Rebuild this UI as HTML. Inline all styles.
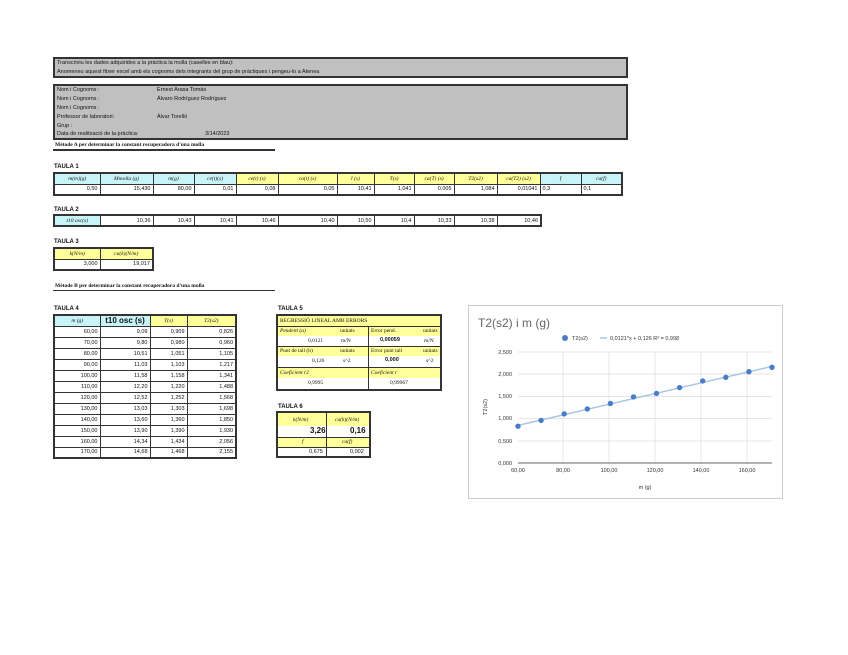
<!DOCTYPE html>
<html><head><meta charset="utf-8">
<style>
*{margin:0;padding:0;box-sizing:border-box}
body{width:848px;height:655px;background:#fff;position:relative;overflow:hidden;font-family:"Liberation Sans",sans-serif;color:#111}
.a{position:absolute;white-space:nowrap}
.box{position:absolute;background:#c0c0c0;border:2px solid #333}
.t{font-size:5.5px;position:absolute;white-space:nowrap}
.lbl{position:absolute;font-size:6px;font-weight:bold}
table{position:absolute;border-collapse:collapse;table-layout:fixed;font-size:5.5px}
td{border:1px solid #333;height:11px;padding:0 2px;text-align:right;overflow:hidden;white-space:nowrap}
.c{background:#c8f4f8;text-align:center;font-style:italic;font-family:"Liberation Serif",serif}
.y{background:#ffff99;text-align:center;font-style:italic;font-family:"Liberation Serif",serif}
.outer{border:2px solid #333}
</style></head><body>

<div class="box" style="left:53px;top:57px;width:575px;height:21px">
<div class="t" style="left:2px;top:1px">Transcriviu les dades adquirides a la pràctica la molla (caselles en blau):</div>
<div class="t" style="left:2px;top:10px">Anomeneu aquest fitxer excel amb els cognoms dels integrants del grup de pràctiques i pengeu-lo a Atenea</div>
</div>

<div class="box" style="left:53px;top:84px;width:575px;height:56px">
<div class="t" style="left:2px;top:1px">Nom i Cognoms :</div><div class="t" style="left:102px;top:1px">Ernest Arasa Tomàs</div>
<div class="t" style="left:2px;top:10px">Nom i Cognoms :</div><div class="t" style="left:102px;top:10px">Álvaro Rodríguez Rodríguez</div>
<div class="t" style="left:2px;top:19px">Nom i Cognoms :</div>
<div class="t" style="left:2px;top:28px">Professor de laboratori:</div><div class="t" style="left:102px;top:28px">Àlvar Torelló</div>
<div class="t" style="left:2px;top:37px">Grup :</div>
<div class="t" style="left:2px;top:45px">Data de realització de la pràctica:</div><div class="t" style="left:150px;top:45px">3/14/2023</div>
</div>

<div class="a" style="left:55px;top:142px;font-size:5.5px;font-weight:bold;font-family:'Liberation Serif',serif">Mètode A per determinar la constant recuperadora d'una molla</div>
<div class="a" style="left:53px;top:149px;width:222px;height:2px;background:#333"></div>

<div class="lbl" style="left:54px;top:164px">TAULA 1</div>
<table class="outer" style="left:53px;top:172px;width:568px">
<colgroup><col style="width:46px"><col style="width:53px"><col style="width:41px"><col style="width:42px"><col style="width:42px"><col style="width:59px"><col style="width:37px"><col style="width:40px"><col style="width:40px"><col style="width:43px"><col style="width:43px"><col style="width:41px"><col style="width:41px"></colgroup>
<tr><td class="c">m(m)(g)</td><td class="c">Mmolla (g)</td><td class="c">m(g)</td><td class="c">ce(t)(s)</td><td class="y">ce(t) (s)</td><td class="y">ca(t) (s)</td><td class="y">t̄ (s)</td><td class="y">T(s)</td><td class="y">ca(T) (s)</td><td class="y">T2(s2)</td><td class="y">ca(T2) (s2)</td><td class="c">f</td><td class="c">ca(f)</td></tr>
<tr><td>0,50</td><td>15,430</td><td>80,00</td><td>0,01</td><td>0,08</td><td>0,05</td><td>10,41</td><td>1,041</td><td>0,005</td><td>1,084</td><td>0,01041</td><td style="text-align:left">0,3</td><td style="text-align:left">0,1</td></tr>
</table>

<div class="lbl" style="left:54px;top:207px">TAULA 2</div>
<table class="outer" style="left:53px;top:214px;width:487px">
<colgroup><col style="width:46px"><col style="width:53px"><col style="width:41px"><col style="width:42px"><col style="width:42px"><col style="width:59px"><col style="width:37px"><col style="width:40px"><col style="width:40px"><col style="width:43px"><col style="width:44px"></colgroup>
<tr><td class="c">t10 osc(s)</td><td>10,36</td><td>10,43</td><td>10,41</td><td>10,46</td><td>10,40</td><td>10,50</td><td>10,4</td><td>10,33</td><td>10,38</td><td>10,46</td></tr>
</table>

<div class="lbl" style="left:54px;top:239px">TAULA 3</div>
<table class="outer" style="left:53px;top:247px;width:99px">
<colgroup><col style="width:46px"><col style="width:53px"></colgroup>
<tr><td class="y">k(N/m)</td><td class="y">ca(k)(N/m)</td></tr>
<tr><td>3,000</td><td>19,017</td></tr>
</table>

<div class="a" style="left:55px;top:283px;font-size:5.5px;font-weight:bold;font-family:'Liberation Serif',serif">Mètode B per determinar la constant recuperadora d'una molla</div>
<div class="a" style="left:53px;top:290px;width:222px;height:1px;background:#333"></div>

<div class="lbl" style="left:54px;top:306px">TAULA 4</div>
<table class="outer" style="left:53px;top:314px;width:182px">
<colgroup><col style="width:46px"><col style="width:50px"><col style="width:37px"><col style="width:49px"></colgroup>
<tr><td class="c">m (g)</td><td class="c" style="font-style:normal;font-weight:bold;font-size:8px;font-family:'Liberation Sans',sans-serif">t10 osc (s)</td><td class="y">T(s)</td><td class="y">T2(s2)</td></tr>
<tr><td>60,00</td><td>9,09</td><td>0,909</td><td>0,826</td></tr>
<tr><td>70,00</td><td>9,80</td><td>0,980</td><td>0,960</td></tr>
<tr><td>80,00</td><td>10,51</td><td>1,051</td><td>1,105</td></tr>
<tr><td>90,00</td><td>11,03</td><td>1,103</td><td>1,217</td></tr>
<tr><td>100,00</td><td>11,58</td><td>1,158</td><td>1,341</td></tr>
<tr><td>110,00</td><td>12,20</td><td>1,220</td><td>1,488</td></tr>
<tr><td>120,00</td><td>12,52</td><td>1,252</td><td>1,568</td></tr>
<tr><td>130,00</td><td>13,03</td><td>1,303</td><td>1,698</td></tr>
<tr><td>140,00</td><td>13,60</td><td>1,360</td><td>1,850</td></tr>
<tr><td>150,00</td><td>13,90</td><td>1,390</td><td>1,930</td></tr>
<tr><td>160,00</td><td>14,34</td><td>1,434</td><td>2,056</td></tr>
<tr><td>170,00</td><td>14,68</td><td>1,468</td><td>2,155</td></tr>
</table>

<div class="lbl" style="left:278px;top:306px">TAULA 5</div>
<div class="a" style="left:276px;top:314px;width:166px;height:77px;border:2px solid #333;font-family:'Liberation Serif',serif;font-size:5.5px">
 <div class="a" style="left:0;top:0;width:162px;height:10px;background:#ffff99;padding:2px 2px">REGRESSIÓ LINEAL AMB ERRORS</div>
 <div class="a" style="left:0;top:11px;width:162px;height:9px;background:#ffff99"></div>
 <div class="a" style="left:0;top:31px;width:162px;height:9px;background:#ffff99"></div>
 <div class="a" style="left:0;top:52px;width:162px;height:10px;background:#ffff99"></div>
 <div class="a" style="left:0;top:10px;width:162px;height:1px;background:#333"></div>
 <div class="a" style="left:0;top:30px;width:162px;height:1px;background:#333"></div>
 <div class="a" style="left:0;top:51px;width:162px;height:1px;background:#333"></div>
 <div class="a" style="left:90px;top:10px;width:1px;height:63px;background:#333"></div>
 <div class="a" style="left:2px;top:12px;font-style:italic">Pendent (a)</div><div class="a" style="left:62px;top:12px">unitats</div>
 <div class="a" style="left:93px;top:12px">Error pend.</div><div class="a" style="left:145px;top:12px">unitats</div>
 <div class="a" style="left:30px;top:22px">0,0121</div><div class="a" style="left:63px;top:22px">m/N</div>
 <div class="a" style="left:102px;top:21px;font-family:'Liberation Sans';font-weight:bold">0,00059</div><div class="a" style="left:146px;top:22px">m/N</div>
 <div class="a" style="left:2px;top:32px">Punt de tall (b)</div><div class="a" style="left:62px;top:32px">unitats</div>
 <div class="a" style="left:93px;top:32px">Error punt tall</div><div class="a" style="left:145px;top:32px">unitats</div>
 <div class="a" style="left:34px;top:42px">0,126</div><div class="a" style="left:65px;top:42px">s^2</div>
 <div class="a" style="left:107px;top:41px;font-family:'Liberation Sans';font-weight:bold">0,000</div><div class="a" style="left:148px;top:42px">s^2</div>
 <div class="a" style="left:2px;top:54px;font-style:italic">Coeficient r2</div>
 <div class="a" style="left:93px;top:54px;font-style:italic">Coeficient r</div>
 <div class="a" style="left:30px;top:64px">0,9995</div><div class="a" style="left:112px;top:64px">0,99967</div>
</div>

<div class="lbl" style="left:278px;top:404px">TAULA 6</div>
<div class="a" style="left:276px;top:411px;width:95px;height:47px;border:2px solid #333;font-family:'Liberation Serif',serif;font-size:5.5px">
 <div class="a" style="left:0;top:0;width:91px;height:13px;background:#ffff99"></div>
 <div class="a" style="left:0;top:24px;width:91px;height:11px;background:#ffff99"></div>
 <div class="a" style="left:48px;top:0;width:1px;height:43px;background:#333"></div>
 <div class="a" style="left:0;top:24px;width:91px;height:1px;background:#333"></div>
 <div class="a" style="left:0;top:34px;width:91px;height:1px;background:#333"></div>
 <div class="a" style="left:15px;top:4px;font-style:italic">k(N/m)</div><div class="a" style="left:57px;top:4px;font-style:italic">ca(k)(N/m)</div>
 <div class="a" style="left:32px;top:13px;font-family:'Liberation Sans';font-weight:bold;font-size:8px">3,26</div>
 <div class="a" style="left:72px;top:13px;font-family:'Liberation Sans';font-weight:bold;font-size:8px">0,16</div>
 <div class="a" style="left:24px;top:26px;font-style:italic">f</div><div class="a" style="left:64px;top:26px;font-style:italic">ca(f)</div>
 <div class="a" style="left:31px;top:36px;font-family:'Liberation Sans'">0,675</div><div class="a" style="left:72px;top:36px;font-family:'Liberation Sans'">0,002</div>
</div>

<svg class="a" style="left:0;top:0" width="848" height="655" font-family="Liberation Sans, sans-serif">
 <rect x="468.5" y="305.5" width="314" height="193" fill="#fff" stroke="#ccc"/>
 <text x="478" y="327" font-size="12" fill="#666">T2(s2) i m (g)</text>
 <circle cx="565" cy="338" r="3" fill="#4a7ec4"/>
 <text x="572" y="340" font-size="5.5" fill="#333">T2(s2)</text>
 <line x1="600" y1="338" x2="607" y2="338" stroke="#a9c6e6" stroke-width="1.5"/>
 <text x="610" y="340" font-size="5.5" fill="#333">0,0121*x + 0,126 R² = 0,998</text>
 <g stroke="#ddd" stroke-width="0.7">
  <line x1="518" y1="352" x2="772" y2="352"/><line x1="518" y1="374" x2="772" y2="374"/><line x1="518" y1="396.5" x2="772" y2="396.5"/><line x1="518" y1="418.5" x2="772" y2="418.5"/><line x1="518" y1="441" x2="772" y2="441"/>
  <line x1="563" y1="352" x2="563" y2="463"/><line x1="609" y1="352" x2="609" y2="463"/><line x1="655" y1="352" x2="655" y2="463"/><line x1="701" y1="352" x2="701" y2="463"/><line x1="747" y1="352" x2="747" y2="463"/>
 </g>
 <line x1="518" y1="463" x2="772" y2="463" stroke="#333" stroke-width="0.8"/>
 <g font-size="5.5" fill="#333" text-anchor="end">
  <text x="512" y="354">2,500</text><text x="512" y="376">2,000</text><text x="512" y="398">1,500</text><text x="512" y="420">1,000</text><text x="512" y="443">0,500</text><text x="512" y="465">0,000</text>
 </g>
 <g font-size="5.5" fill="#333" text-anchor="middle">
  <text x="518" y="472">60,00</text><text x="563" y="472">80,00</text><text x="609" y="472">100,00</text><text x="655" y="472">120,00</text><text x="701" y="472">140,00</text><text x="747" y="472">160,00</text>
  <text x="645" y="489">m (g)</text>
  <text transform="translate(487,407) rotate(-90)">T2(s2)</text>
 </g>
 <line x1="518" y1="425.4" x2="772" y2="366.4" stroke="#a9c6e6" stroke-width="1.5"/>
 <g fill="#4a7ec4">
  <circle cx="518" cy="426.2" r="2.7"/><circle cx="541.1" cy="420.4" r="2.7"/><circle cx="564.2" cy="413.9" r="2.7"/><circle cx="587.3" cy="409" r="2.7"/><circle cx="610.4" cy="403.5" r="2.7"/><circle cx="633.5" cy="396.9" r="2.7"/><circle cx="656.5" cy="393.4" r="2.7"/><circle cx="679.6" cy="387.6" r="2.7"/><circle cx="702.7" cy="380.9" r="2.7"/><circle cx="725.8" cy="377.3" r="2.7"/><circle cx="748.9" cy="371.7" r="2.7"/><circle cx="772" cy="367.3" r="2.7"/>
 </g>
</svg>
</body></html>
